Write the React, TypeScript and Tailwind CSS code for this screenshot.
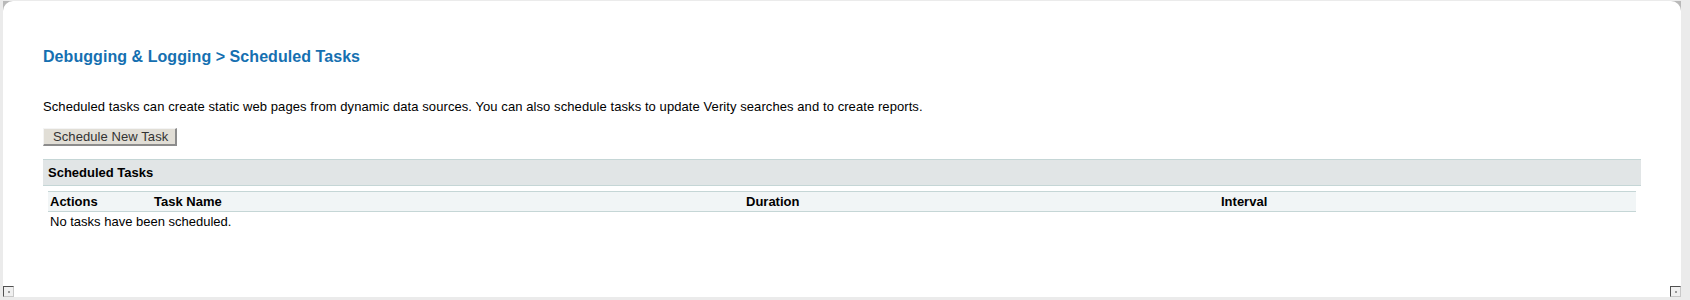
import React from "react";

function Grip({ className }: { className: string }) {
  return (
    <div
      className={
        "absolute w-[11px] h-[11px] border-t border-l border-[#505050] border-r border-b border-r-[#c8c8c8] border-b-[#c8c8c8] bg-[#f0f0f0] flex items-center justify-center " +
        className
      }
    >
      <div className="w-[2px] h-[2px] bg-[#9a9a9a]" />
    </div>
  );
}

export default function App() {
  return (
    <div
      className="w-[1690px] h-[300px] bg-[#ebebeb] pt-[1px] pl-[3px] pr-[9px] pb-[3px] text-black"
      style={{ fontFamily: '"Liberation Sans", Arial, sans-serif' }}
    >
      <div className="h-full bg-[#b9b9b9]">
        <div className="relative h-full bg-white rounded-t-[10px] pl-[40px] pr-[40px] pt-[46px]">
          <h1 className="text-[16px] leading-[19px] font-bold text-[#1570b1] tracking-[0.06px]">
            Debugging &amp; Logging &gt; Scheduled Tasks
          </h1>
          <p className="mt-[33px] text-[13px] leading-[15px] tracking-[0.08px]">
            Scheduled tasks can create static web pages from dynamic data sources. You can also schedule tasks to update Verity searches and to create reports.
          </p>
          <button className="mt-[14px] block w-[134px] h-[18px] bg-[#e1ded6] border-t border-l border-t-[#f4f4f4] border-l-[#f4f4f4] border-r-2 border-b-2 border-r-[#8c8c8c] border-b-[#8c8c8c] text-[13px] leading-[15px] text-[#333] text-left pl-[9px] tracking-[0.08px]">
            Schedule New Task
          </button>
          <div className="mt-[13px] w-[1598px] h-[27px] bg-[#e1e5e6] border-t border-b border-[#c5d6d6] flex items-center pl-[5px]">
            <span className="text-[13px] leading-[15px] font-bold">Scheduled Tasks</span>
          </div>
          <div className="mt-[5px] ml-[5px] w-[1588px]">
            <div className="grid grid-cols-[104px_592px_475px_1fr] h-[21px] items-center bg-[#f1f5f6] border-t border-b border-[#c5d6d6] px-[2px] text-[13px] leading-[15px] font-bold">
              <div>Actions</div>
              <div>Task Name</div>
              <div>Duration</div>
              <div>Interval</div>
            </div>
            <div className="px-[2px] pt-[2px] text-[13px] leading-[15px]">
              No tasks have been scheduled.
            </div>
          </div>
          <Grip className="left-0 bottom-[0px]" />
          <Grip className="right-0 bottom-[0px]" />
        </div>
      </div>
    </div>
  );
}
